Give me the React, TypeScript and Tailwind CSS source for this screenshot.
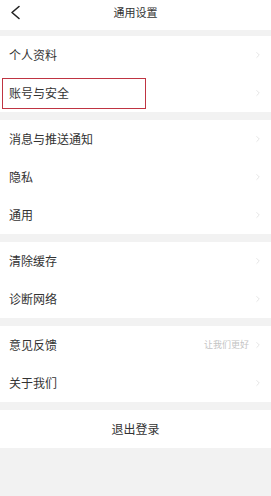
import { ChevronRight } from "lucide-react";

type Row = { label: string; hint?: string; boxed?: boolean };

const SECTIONS: Row[][] = [
  [{ label: "个人资料" }, { label: "账号与安全", boxed: true }],
  [{ label: "消息与推送通知" }, { label: "隐私" }, { label: "通用" }],
  [{ label: "清除缓存" }, { label: "诊断网络" }],
  [{ label: "意见反馈", hint: "让我们更好" }, { label: "关于我们" }],
];

function SettingRow({ row }: { row: Row }) {
  return (
    <div className="relative flex h-[38px] items-center justify-between pl-[9px] pr-[8px]">
      {row.boxed && (
        <div className="absolute left-[2px] top-[4px] h-[31px] w-[144px] border-[1.5px] border-[#bf3442]" />
      )}
      <span className="text-[12px] text-[#333]">{row.label}</span>
      <div className="flex items-center gap-1">
        {row.hint && <span className="text-[9px] text-[#c4c4c4]">{row.hint}</span>}
        <ChevronRight size={10} strokeWidth={1.5} className="text-[#d6d6d6]" />
      </div>
    </div>
  );
}

export default function App() {
  return (
    <div
      className="flex h-[496px] w-[271px] flex-col gap-[8px] bg-[#f2f2f2]"
      style={{ fontFamily: '"Noto Sans CJK SC", "Noto Sans", sans-serif' }}
    >
      <header className="relative -mb-[2px] flex h-[30px] items-start justify-center bg-white pt-[4px]">
        <svg
          width="12"
          height="15"
          viewBox="0 0 12 15"
          className="absolute left-[9px] top-[5px]"
          fill="none"
          stroke="#222"
          strokeWidth="1.6"
          strokeLinecap="round"
          strokeLinejoin="round"
        >
          <path d="M10 1.5 L3 7.5 L10 13.5" />
        </svg>
        <span className="text-[11px] leading-[16px] text-[#333]">通用设置</span>
      </header>

      {SECTIONS.map((sec, i) => (
        <section key={i} className="bg-white">
          {sec.map((r) => (
            <SettingRow key={r.label} row={r} />
          ))}
        </section>
      ))}

      <button className="flex h-[38px] items-center justify-center bg-white text-[12px] text-[#333]">
        退出登录
      </button>
    </div>
  );
}
